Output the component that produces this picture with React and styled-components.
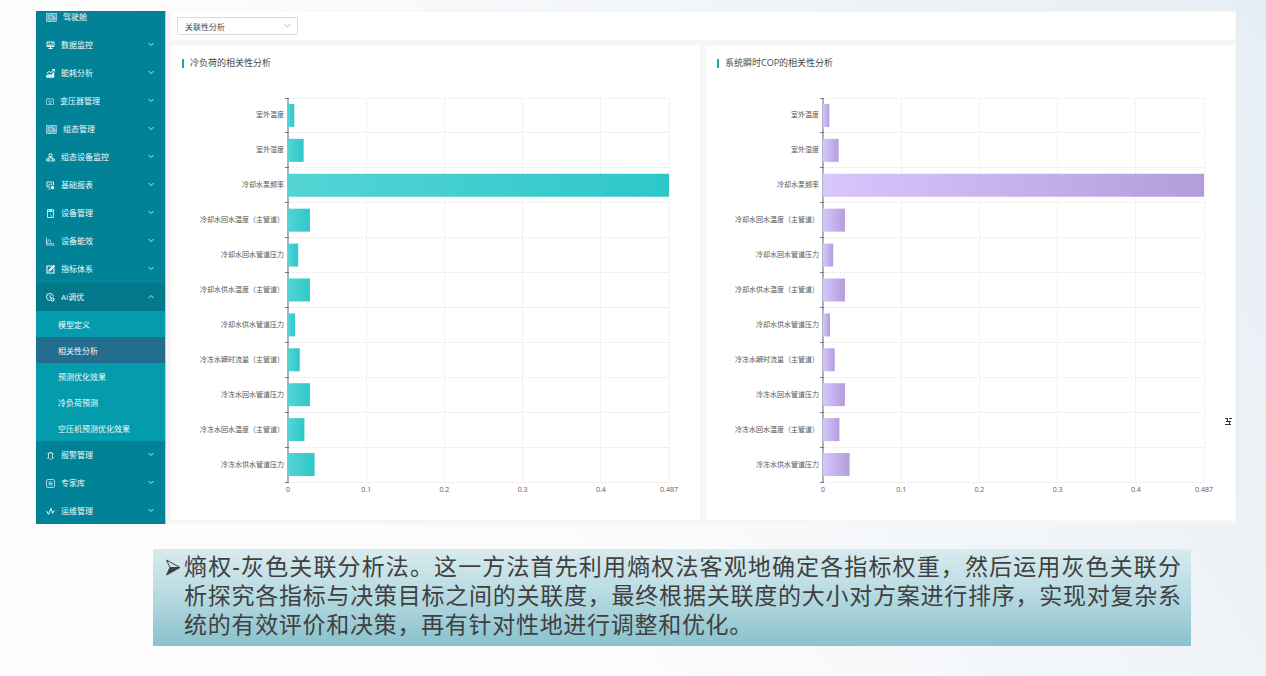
import React, { useState } from "react";
import styled, { createGlobalStyle } from "styled-components";

const GlobalStyle = createGlobalStyle`
  * {
    box-sizing: border-box;
  }

  body {
    margin: 0;
    min-height: 100vh;
    font-family: "Open Sans", "Noto Sans CJK SC", sans-serif;
    background: linear-gradient(58deg, #fdfdfe 0%, #fcfcfd 38%, #f3f6f9 62%, #ecf1f6 82%, #e6eef5 100%);
  }
`;

const Page = styled.div`
  padding: 11px 0 30px;
`;

const Screen = styled.div`
  display: flex;
  margin: 0 30px 0 36px;
  background-color: #f6f6f7;
`;

const Sidebar = styled.aside`
  flex: none;
  width: 130px;
  overflow: hidden;
  background-color: #018297;
  border-right: 1px solid #a9d4dd;
  contain: size;
`;

const Menu = styled.nav`
  display: flex;
  flex-direction: column;
  margin-top: -8px;
`;

const MenuItem = styled.button`
  flex: none;
  display: flex;
  align-items: center;
  gap: 6px;
  height: 28px;
  padding: 0 11px 0 10px;
  border: none;
  color: #eefafa;
  font-family: inherit;
  font-size: 8px;
  line-height: 12px;
  text-align: left;
  cursor: pointer;
  background-color: ${({ $open }) => ($open ? "#02788a" : "transparent")};
`;

const MenuLabel = styled.span`
  flex: 1;
`;

const SubMenu = styled.div`
  display: flex;
  flex-direction: column;
  background-color: #049cac;
`;

const SubItem = styled.a`
  height: 26px;
  padding-left: 22px;
  color: #f2fbfb;
  font-size: 8px;
  line-height: 27px;
  text-decoration: none;
  background-color: ${({ $active }) => ($active ? "#236d8e" : "transparent")};
`;

const Icon = styled.svg`
  flex: none;
  display: block;
  fill: none;
  stroke: currentColor;
`;

const Main = styled.main`
  flex: 1;
  min-width: 0;
  display: flex;
  flex-direction: column;
  gap: 6px;
  padding: 1px 1px 4px 5px;
`;

const Toolbar = styled.div`
  display: flex;
  align-items: center;
  height: 28px;
  padding-left: 6px;
  background-color: #fff;
`;

const SelectBox = styled.label`
  display: grid;
  align-items: center;
  width: 121px;
  color: #b4b7bb;

  > * {
    grid-area: 1 / 1;
  }

  > svg {
    justify-self: end;
    margin-right: 7px;
    pointer-events: none;
  }
`;

const Select = styled.select`
  appearance: none;
  width: 100%;
  height: 18px;
  padding: 0 20px 0 7px;
  border: 1px solid #d9dadc;
  border-radius: 1px;
  color: #444;
  font-family: inherit;
  font-size: 8px;
  background-color: #fff;
`;

const Cards = styled.div`
  display: grid;
  grid-template-columns: 1fr 1fr;
  gap: 6px;
`;

const Card = styled.section`
  min-width: 0;
  padding: 11px 31px 38px 11px;
  background-color: #fff;
`;

const CardTitle = styled.h2`
  display: flex;
  align-items: center;
  gap: 6px;
  margin: 0 0 29px;
  color: #4a4a4a;
  font-size: 9px;
  font-weight: 400;
  line-height: 12px;

  &::before {
    content: "";
    width: 2px;
    height: 9px;
    background-color: #14a9b4;
  }
`;

const Chart = styled.div`
  display: grid;
  grid-template-columns: 102px 1fr;
  gap: 4px;
  height: 384px;
`;

const ChartLabels = styled.div`
  display: grid;
  grid-template-rows: repeat(11, 1fr);
  align-items: center;
  color: #555;
  font-size: 7px;
  line-height: 10px;
  text-align: right;
  white-space: nowrap;
`;

const Plot = styled.svg`
  display: block;
  width: 100%;
  height: 100%;
  overflow: visible;
`;

const AxisText = styled.text`
  fill: #5a5a5a;
  font-size: 7px;
  text-anchor: middle;
`;

const SideHandle = styled.svg`
  position: absolute;
  top: 417px;
  right: 34px;
`;

const Note = styled.div`
  display: flex;
  gap: 3px;
  margin: 25px 75px 0 153px;
  padding: 4px 10px 6px 12px;
  color: #404040;
  font-family: "Liberation Sans", "Noto Sans CJK SC", sans-serif;
  font-size: 23px;
  line-height: 29px;
  background: linear-gradient(#d9ebee 0%, #bcdde4 40%, #a9d2da 65%, #92c7d1 88%, #8cc2ce 100%);
`;

const NoteText = styled.p`
  flex: 1;
  margin: 0;
`;

const NoteLine = styled.span`
  display: block;
  padding-right: ${({ $short }) => ($short ? "43%" : "0")};
  white-space: nowrap;
  text-align: justify;
  text-align-last: justify;
`;

const icons = {
  board: {
    width: 11,
    viewBox: "0 0 22 18",
    body: (
      <>
        <rect x="1" y="1" width="20" height="16" fill="currentColor" fillOpacity="0.35" />
        <path d="M4 5h5M4 8h4M4 13l3-3 3 3M13 4v4h5M12 13h3v-3h3v4M11 1v4M8 17v-3" />
      </>
    ),
  },
  monitor: {
    viewBox: "0 0 18 18",
    body: (
      <>
        <path d="M2 2h14v9H2zM5 15h8M9 11v4" strokeWidth="2" />
        <path d="M4 8l3-3 2 3 5-4M4 9h10" strokeWidth="1.3" />
      </>
    ),
  },
  growth: {
    viewBox: "0 0 18 18",
    body: (
      <>
        <path d="M1 17v-4l4-2v6zM6 17v-6l4 1v5zM11 17v-6l5-5v11z" fill="currentColor" />
        <path d="M1 9l5-4 4 2 6-5M12 1h5v4" strokeWidth="2" />
      </>
    ),
  },
  transformer: {
    width: 8,
    viewBox: "0 0 16 18",
    body: <path d="M1 4h14v11H1zM4 4V2M12 4V2M8 6v7M4 9h2M10 9h3M6 13h4" strokeWidth="1.1" />,
  },
  nodes: {
    viewBox: "0 0 18 18",
    body: <path d="M6 2h6v5H6zM1 12h5v4H1zM12 12h5v4h-5zM9 7v3M4 12v-2h10v2M7 16h4" strokeWidth="1.7" />,
  },
  report: {
    viewBox: "0 0 18 18",
    body: (
      <>
        <path d="M15 8V2H2v10h6M5 16h4M5 9V7M8 9V5M11 8V5" strokeWidth="1.8" />
        <circle cx="13" cy="13" r="3" fill="currentColor" />
      </>
    ),
  },
  device: {
    viewBox: "0 0 18 18",
    body: <path d="M3 1h12v16H3zM3 5h12M6 3h6M9 9v2M9 14h3" strokeWidth="1.6" />,
  },
  curve: {
    viewBox: "0 0 18 18",
    body: <path d="M1 1v15h16M3 13c2-10 4-10 6-4s3 5 7 4M5 13h4" strokeWidth="1.4" />,
  },
  edit: {
    viewBox: "0 0 18 18",
    body: <path d="M12 2H2v14h14V7M6 12l1-3 8-8 2 2-8 8z" strokeWidth="2.2" />,
  },
  clock: {
    viewBox: "0 0 18 18",
    body: (
      <>
        <path d="M8 15A7 7 0 1 1 15 7M8 4v5h3M2 3l2-2" strokeWidth="1.8" />
        <circle cx="13" cy="13" r="3" strokeWidth="2.2" />
      </>
    ),
  },
  alarm: {
    viewBox: "0 0 18 18",
    body: <path d="M5 14V4h8v10M2 14h4M12 14h4M7 16h4M7 3h4M2 4l1 1M16 4l-1 1" strokeWidth="1.5" />,
  },
  list: {
    viewBox: "0 0 18 18",
    body: (
      <>
        <rect x="1" y="1" width="16" height="16" rx="3" strokeWidth="1.4" />
        <path d="M5 6h8M5 9h8M5 12h8" strokeWidth="1.4" />
      </>
    ),
  },
  pulse: {
    viewBox: "0 0 18 18",
    body: (
      <>
        <path d="M1 8l4 6 5-11 3 9 4-5" strokeWidth="2" />
        <circle cx="5" cy="14" r="1" />
        <circle cx="13" cy="12" r="1" />
      </>
    ),
  },
};

const menu = [
  { label: "驾驶舱", icon: "board", leaf: true },
  { label: "数据监控", icon: "monitor" },
  { label: "能耗分析", icon: "growth" },
  { label: "变压器管理", icon: "transformer" },
  { label: "组态管理", icon: "board" },
  { label: "组态设备监控", icon: "nodes" },
  { label: "基础报表", icon: "report" },
  { label: "设备管理", icon: "device" },
  { label: "设备能效", icon: "curve" },
  { label: "指标体系", icon: "edit" },
  {
    label: "AI调优",
    icon: "clock",
    children: ["模型定义", "相关性分析", "预测优化效果", "冷负荷预测", "空压机预测优化效果"],
  },
  { label: "报警管理", icon: "alarm" },
  { label: "专家库", icon: "list" },
  { label: "运维管理", icon: "pulse" },
];

const MAX = 0.487;
const ticks = [0, 0.1, 0.2, 0.3, 0.4, MAX];

const factors = [
  { name: "室外温度", value: 0.008 },
  { name: "室外湿度", value: 0.02 },
  { name: "冷却水泵频率", value: 0.487 },
  { name: "冷却水回水温度（主管道）", value: 0.028 },
  { name: "冷却水回水管道压力", value: 0.013 },
  { name: "冷却水供水温度（主管道）", value: 0.028 },
  { name: "冷却水供水管道压力", value: 0.009 },
  { name: "冷冻水瞬时流量（主管道）", value: 0.015 },
  { name: "冷冻水回水管道压力", value: 0.028 },
  { name: "冷冻水回水温度（主管道）", value: 0.021 },
  { name: "冷冻水供水管道压力", value: 0.034 },
];

const percent = (value, total) => `${(value / total) * 100}%`;

const Chevron = ({ up, size = 6 }) => (
  <Icon width={size} height={size} viewBox="0 0 12 12" strokeWidth="1.6">
    <path d={up ? "M1 8l5-5 5 5" : "M1 2l5 5 5-5"} />
  </Icon>
);

const BarChart = ({ id, from, to }) => (
  <Chart>
    <ChartLabels>
      {factors.map(({ name }) => (
        <span key={name}>{name}</span>
      ))}
    </ChartLabels>
    <Plot>
      <defs>
        <linearGradient id={id}>
          <stop offset="0" stopColor={from} />
          <stop offset="1" stopColor={to} />
        </linearGradient>
      </defs>
      <g stroke="#eeeef0" strokeDasharray="3 1" shapeRendering="crispEdges">
        {[...factors, null].map((_, i) => {
          const y = percent(i, factors.length);
          return <line key={i} x1="0" x2="100%" y1={y} y2={y} />;
        })}
        {ticks.slice(1).map((tick) => {
          const x = percent(tick, MAX);
          return <line key={tick} x1={x} x2={x} y1="0" y2="100%" />;
        })}
      </g>
      <line x1="0" x2="0" y1="0" y2="100%" stroke="#aab2c3" strokeWidth="2" />
      <g stroke="#6e7889" shapeRendering="crispEdges">
        {[...factors, null].map((_, i) => {
          const y = percent(i, factors.length);
          return <line key={i} x1="-3" x2="1" y1={y} y2={y} />;
        })}
      </g>
      {factors.map(({ name, value }, i) => (
        <rect
          key={name}
          x="0"
          y={percent(i + 0.17, factors.length)}
          width={percent(value, MAX)}
          height="23"
          fill={`url(#${id})`}
        />
      ))}
      {ticks.map((tick) => (
        <AxisText key={tick} x={percent(tick, MAX)} y="100%" dy="10">
          {tick}
        </AxisText>
      ))}
    </Plot>
  </Chart>
);

export default function App() {
  const [open, setOpen] = useState("AI调优");
  const [page, setPage] = useState("相关性分析");

  return (
    <Page>
      <GlobalStyle />
      <Screen>
        <Sidebar>
          <Menu>
            {menu.map(({ label, icon, leaf, children }) => {
              const isOpen = open === label;
              const { width = 9, viewBox, body } = icons[icon];
              return (
                <React.Fragment key={label}>
                  <MenuItem
                    type="button"
                    $open={isOpen}
                    onClick={() => setOpen(isOpen ? "" : label)}
                  >
                    <Icon width={width} height="9" viewBox={viewBox}>
                      {body}
                    </Icon>
                    <MenuLabel>{label}</MenuLabel>
                    {!leaf && <Chevron up={isOpen} />}
                  </MenuItem>
                  {isOpen && children && (
                    <SubMenu>
                      {children.map((child) => (
                        <SubItem
                          key={child}
                          href="#"
                          $active={page === child}
                          onClick={() => setPage(child)}
                        >
                          {child}
                        </SubItem>
                      ))}
                    </SubMenu>
                  )}
                </React.Fragment>
              );
            })}
          </Menu>
        </Sidebar>
        <Main>
          <Toolbar>
            <SelectBox>
              <Select aria-label="分析类型">
                <option>关联性分析</option>
              </Select>
              <Chevron size={7} />
            </SelectBox>
          </Toolbar>
          <Cards>
            <Card>
              <CardTitle>冷负荷的相关性分析</CardTitle>
              <BarChart id="load" from="#55d4d5" to="#2dc7ca" />
            </Card>
            <Card>
              <CardTitle>系统瞬时COP的相关性分析</CardTitle>
              <BarChart id="cop" from="#d7c7fd" to="#b39ddb" />
            </Card>
          </Cards>
        </Main>
      </Screen>
      <SideHandle width="8" height="9" viewBox="0 0 8 9" stroke="#333" fill="none">
        <path d="M1 1.5h3M5 1.5h3M2 4.5h5M1 7.5h6M3.5 2v3M5.5 5v2" />
      </SideHandle>
      <Note>
        <svg width="16" height="29" viewBox="0 0 16 29" fill="none" stroke="#404040">
          <path d="M1.5 7L15 14.5H5z" />
          <path d="M15 14.5L1.5 22L5 14.5z" fill="#404040" />
        </svg>
        <NoteText>
          <NoteLine>
            熵权-灰色关联分析法。这一方法首先利用熵权法客观地确定各指标权重，然后运用灰色关联分
          </NoteLine>
          <NoteLine>
            析探究各指标与决策目标之间的关联度，最终根据关联度的大小对方案进行排序，实现对复杂系
          </NoteLine>
          <NoteLine $short>统的有效评价和决策，再有针对性地进行调整和优化。</NoteLine>
        </NoteText>
      </Note>
    </Page>
  );
}
